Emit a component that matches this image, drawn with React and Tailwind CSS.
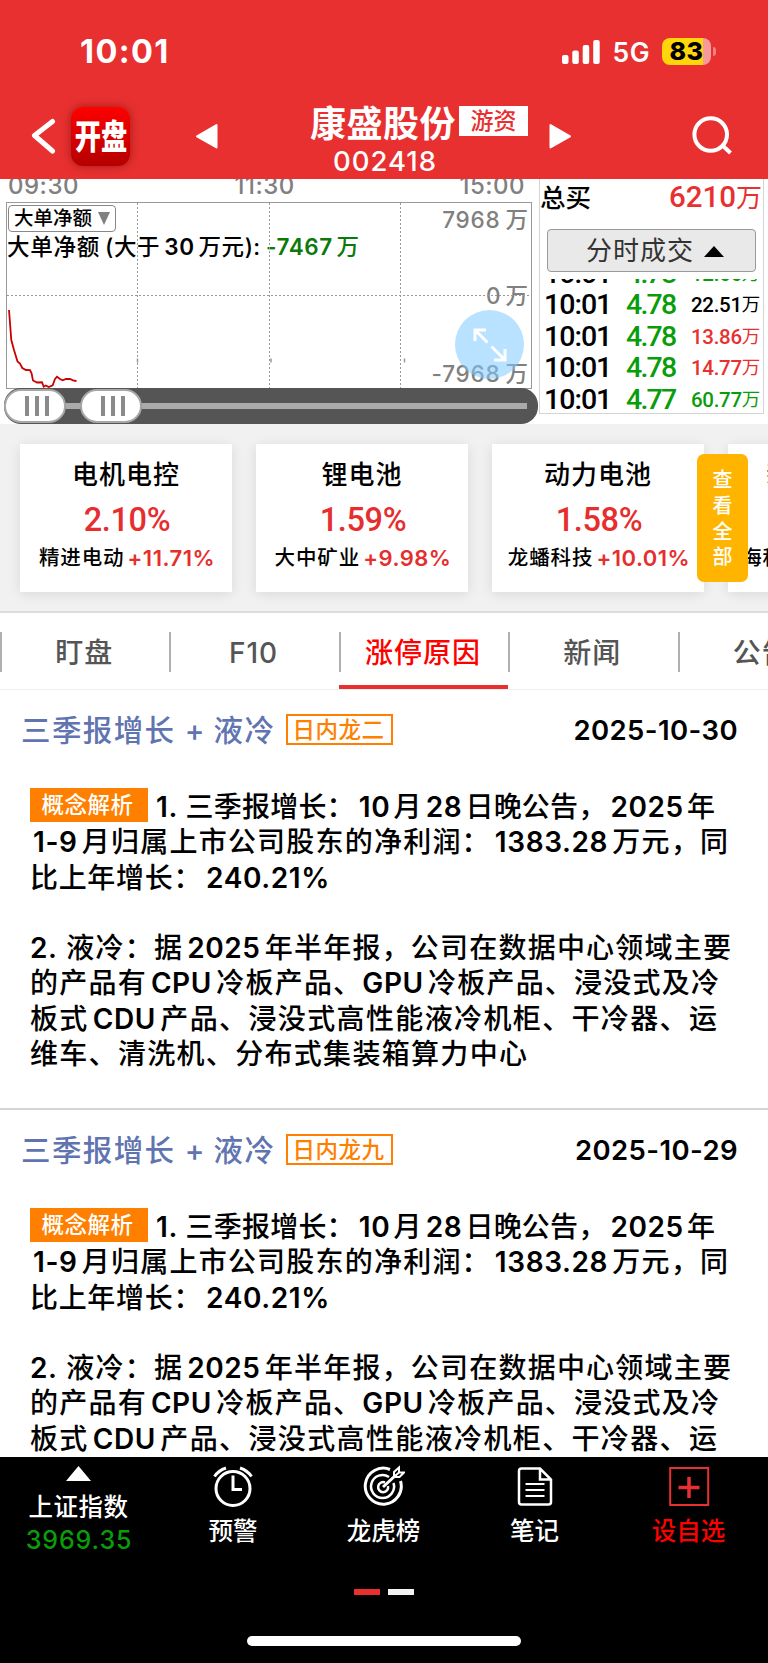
const trades = [
  { time: "10:01", price: "4.78", amount: "12.66", color: "text-[#0a9d0a]" },
  { time: "10:01", price: "4.78", amount: "22.51", color: "text-black" },
  { time: "10:01", price: "4.78", amount: "13.86", color: "text-[#e83030]" },
  { time: "10:01", price: "4.78", amount: "14.77", color: "text-[#e83030]" },
  { time: "10:01", price: "4.77", amount: "60.77", color: "text-[#0a9d0a]" },
];

const sectors = [
  { name: "电机电控", change: "2.10%", stock: "精进电动", stockChange: "+11.71%" },
  { name: "锂电池", change: "1.59%", stock: "大中矿业", stockChange: "+9.98%" },
  { name: "动力电池", change: "1.58%", stock: "龙蟠科技", stockChange: "+10.01%" },
  { name: "新能源汽车", change: "1.42%", stock: "海科新源", stockChange: "+10.00%" },
];

const tabs = ["盯盘", "F10", "涨停原因", "新闻", "公告"];

const reasons = [
  { tag: "日内龙二", date: "2025-10-30" },
  { tag: "日内龙九", date: "2025-10-29" },
];

// Latin runs get a slightly heavier weight and a small gap to the Chinese text
function Mixed({ text }) {
  return text.split(/([A-Za-z0-9.%-]+)/).map((part, i, all) =>
    i % 2 === 1 ? (
      <span
        key={i}
        className={`font-[560] tracking-[0.6px] ${all[i - 1] && !/、$/.test(all[i - 1]) ? "ml-[4px]" : ""} ${
          all[i + 1] && !/^[ ：，]/.test(all[i + 1]) ? "mr-[3px]" : ""
        }`}
      >
        {part}
      </span>
    ) : (
      part
    )
  );
}

function StatusBar() {
  return (
    <div className="flex h-[97px] items-center pt-[6px] pl-[80px] pr-[52px]">
      <span className="pt-[2px] text-[32.500px] font-bold leading-none tracking-[1.400px]">10:01</span>
      <svg className="ml-auto" width="38" height="24" viewBox="0 0 38 24" fill="white">
        <rect x="0" y="15" width="6.5" height="9" rx="2" />
        <rect x="10.3" y="10.5" width="6.5" height="13.5" rx="2" />
        <rect x="20.7" y="5" width="6.5" height="19" rx="2" />
        <rect x="31.2" y="0" width="6.5" height="24" rx="2" />
      </svg>
      <span className="ml-[12px] pt-px text-[26.500px] font-semibold leading-none tracking-[0.500px]">5G</span>
      <div className="ml-[12px] flex h-[27px] w-[49px] items-center justify-center rounded-[8px] bg-[linear-gradient(90deg,#ffd60a_41px,#f69a9b_41px)]">
        <span className="text-[25px] font-extrabold leading-none tracking-[0.500px] text-black">83</span>
      </div>
      <div className="ml-[2px] h-[9px] w-[3px] rounded-r-full bg-[#f28081]" />
    </div>
  );
}

function NavBar() {
  return (
    <div className="flex h-[82px] items-start pl-[31px]">
      <svg className="mt-[21px]" width="26" height="38" viewBox="0 0 26 38" fill="none" stroke="white" strokeWidth="5" strokeLinecap="round" strokeLinejoin="round">
        <path d="M21.5 3.5 3.5 17.5 21.5 33" />
      </svg>
      <div className="mt-[10px] ml-[14px] flex h-[59px] w-[59px] items-center justify-center rounded-[12px] bg-gradient-to-b from-[#ff0000] to-[#b40000] shadow-[0_0_8px_rgba(90,0,0,0.5)]">
        <span className="scale-x-[0.82] scale-y-105 whitespace-nowrap text-[32px] font-black leading-none">开盘</span>
      </div>
      <svg className="mt-[26px] ml-[65px]" width="23" height="27" viewBox="0 0 23 27" fill="white" stroke="white" strokeWidth="2" strokeLinejoin="round">
        <path d="M21.5 2v22.500L2 13.300z" />
      </svg>
      <div className="ml-[92px] flex w-[220px] flex-col">
        <div className="flex items-start">
          <span className="mt-[8px] w-[149px] whitespace-nowrap text-[36px] font-bold leading-[38px] tracking-[0.500px]">康盛股份</span>
          <span className="mt-[9px] flex h-[30px] w-[69px] items-center justify-center whitespace-nowrap bg-white text-[23px] font-medium leading-none text-[#e83030]">
            游资
          </span>
        </div>
        <span className="mt-[6px] ml-[23px] text-[27.500px] font-medium leading-[24px] tracking-[1px]">002418</span>
      </div>
      <svg className="mt-[26px] ml-[19px]" width="23" height="27" viewBox="0 0 23 27" fill="white" stroke="white" strokeWidth="2" strokeLinejoin="round">
        <path d="M1.500 2v22.500L21 13.300z" />
      </svg>
      <svg className="mt-[18px] ml-[119px]" width="42" height="42" viewBox="0 0 42 42" fill="none" stroke="white" strokeWidth="4">
        <circle cx="19.700" cy="19.500" r="16.300" />
        <path d="M30.500 29.500 39.500 38" />
      </svg>
    </div>
  );
}

function Handle() {
  return (
    <div className="z-10 flex h-[34px] w-[62px] items-center justify-center gap-[6px] rounded-[17px] border-2 border-[#a8a8a8] bg-white pl-[4px]">
      <i className="h-[20px] w-[4px] bg-[#8a8a8a]" />
      <i className="h-[20px] w-[4px] bg-[#8a8a8a]" />
      <i className="h-[20px] w-[4px] bg-[#8a8a8a]" />
    </div>
  );
}

function NetChart() {
  return (
    <div className="relative h-[245px] w-[539px] shrink-0 text-[#808080]">
      {/* time axis, partly scrolled under the header */}
      <div className="flex h-[23px] justify-between overflow-hidden pl-[8px] pr-[14px] text-[24px] font-medium leading-[24px] tracking-[0.500px]">
        <span className="-mt-[5px]">09:30</span>
        <span className="-mt-[5px] mr-[9px]">11:30</span>
        <span className="-mt-[5px]">15:00</span>
      </div>

      <div className="ml-[6px] flex h-[187px] w-[526px] justify-between border border-[#999]">
        <div className="pt-[2px]">
          <div className="ml-[1px] flex h-[27px] w-[108px] items-center justify-between rounded-[4px] border border-[#888] pl-[5px] pr-[5px]">
            <span className="whitespace-nowrap text-[19.500px] font-medium leading-none text-black">大单净额</span>
            <svg width="12" height="13" viewBox="0 0 12 13" fill="#808080">
              <path d="M0 0h12L6 13z" />
            </svg>
          </div>
          <div className="mt-px flex whitespace-nowrap text-[22.500px] font-medium leading-[28px] text-black">
            <span className="w-[253px] [text-align-last:justify]">
              <Mixed text="大单净额" />
              <span className="ml-[5px]">(</span>
              <Mixed text="大于30万元" />):
            </span>
            <span className="ml-[6px] w-[93px] text-[#0b7a0b] [text-align-last:justify]">
              <Mixed text="-7467万" />
            </span>
          </div>
        </div>
        <div className="flex flex-col items-end pr-[3px] pt-[3px] text-[22.500px] font-medium leading-[28px]">
          <span className="whitespace-nowrap">
            <span className="mr-[5px] tracking-[0.800px]">7968</span>万
          </span>
          <span className="mt-[48px] whitespace-nowrap">
            <span className="mr-[5px]">0</span>万
          </span>
          <span className="mt-[50px] whitespace-nowrap">
            <span className="mr-[5px] tracking-[0.800px]">-7968</span>万
          </span>
        </div>
      </div>

      <svg className="absolute left-0 top-[23px]" width="539" height="187" viewBox="0 202 539 187" fill="none">
        <path d="M7 295.500H531M137.500 203V388M269.500 203V388M400.500 203V388" stroke="#999" strokeDasharray="2 2" />
        <path d="M137.500 358.500v4M271 358.500v4M404.500 358.500v4" stroke="#999" strokeWidth="1.500" />
        <path
          d="M9 310 11.300 340 14 350 17.500 361.500 20 363.500 22.300 368 26 370 30 370.200 31.500 373 33 380.500 37 382.500 42 382.300 43.700 386.700 45.700 385.500 48.700 387 52.700 385.300 55 379 57 376.700 60 379 62.700 380.300 66 379 70 379 73 380.300 76.500 381"
          stroke="#cc0000"
          strokeWidth="1.800"
        />
      </svg>

      {/* expand button over the chart */}
      <div className="absolute left-[455px] top-[131px] flex h-[69px] w-[69px] items-center justify-center rounded-full bg-[#7dcbff]/55">
        <svg width="34" height="34" viewBox="0 0 34 34" fill="none" stroke="white" strokeWidth="3">
          <path d="M2 13V2H13M2.500 2.500 14.500 14.500M18.500 18.500 31 31M21 32H32V21" />
        </svg>
      </div>

      <div className="relative -mt-px ml-[4px] flex h-[36px] w-[534px] items-center rounded-r-[17px] rounded-l-[17px] bg-[#555]">
        <Handle />
        <div className="h-[6px] w-[14px] bg-[#aaa]" />
        <Handle />
        <div className="h-[6px] w-[385px] bg-[#aaa]" />
      </div>
    </div>
  );
}

function TradePanel() {
  return (
    <div className="h-[235px] w-[225px] overflow-hidden border border-t-0 border-[#d5d5d5]">
      <div className="flex h-[37px] items-center justify-between pr-px">
        <span className="whitespace-nowrap text-[25.500px] font-medium leading-none text-black">总买</span>
        <span className="flex items-center whitespace-nowrap font-['Roboto','Noto_Sans_CJK_SC',sans-serif] text-[29.500px] font-medium leading-none text-[#e83030]">
          6210<span className="text-[26px] font-normal">万</span>
        </span>
      </div>
      <div className="mt-[13px] ml-[7px] flex h-[43px] w-[209px] items-center justify-center gap-[10px] rounded-[4px] border border-[#999] bg-[#e9e9e9] pt-px pl-[7px]">
        <span className="whitespace-nowrap text-[26px] leading-none tracking-[1px] text-[#333]">分时成交</span>
        <svg width="20" height="11" viewBox="0 0 20 11" fill="black">
          <path d="M10 0 20 11H0z" />
        </svg>
      </div>
      <div className="mt-[7px] flex h-[134px] flex-col justify-end overflow-hidden font-['Roboto','Noto_Sans_CJK_SC',sans-serif]">
        {trades.map((t, i) => (
          <div key={i} className="flex h-[31.400px] shrink-0 items-center pt-[5px] pl-[4px] pr-[3px]">
            <span className="w-[82px] text-[28.500px] font-medium leading-none tracking-[-1px] text-black">{t.time}</span>
            <span className="text-[28.500px] font-medium leading-none tracking-[-1.800px] text-[#0a9d0a]">{t.price}</span>
            <span className={`ml-auto flex items-center whitespace-nowrap text-[20.500px] font-medium leading-none tracking-[-0.300px] ${t.color}`}>
              {t.amount}
              <span className="text-[18.500px] font-normal">万</span>
            </span>
          </div>
        ))}
      </div>
    </div>
  );
}

function Sectors() {
  return (
    <div className="relative h-[189px] overflow-hidden border-b-2 border-[#ddd] bg-[#f1f1f1]">
      <div className="flex w-[1000px] gap-[24px] pl-[20px] pt-[20px]">
        {sectors.map((s) => (
          <div key={s.name} className="flex h-[148px] w-[212px] shrink-0 flex-col items-center whitespace-nowrap bg-white shadow-[0_2px_12px_rgba(0,0,0,0.1)]">
            <span className="mt-[16px] text-[26px] font-medium leading-[30px] tracking-[1px] text-black">{s.name}</span>
            <span className="mt-[14px] ml-[2px] font-['Roboto'] text-[32.500px] font-medium leading-[32px] tracking-[-0.400px] text-[#e62e2e]">{s.change}</span>
            <span className="mt-[10px] ml-[2px] flex items-center gap-[3px] text-[20.500px] font-medium leading-[24px] tracking-[0.900px] text-black">
              {s.stock}
              <span className="text-[22px] font-[560] tracking-[0.500px] text-[#e62e2e]">{s.stockChange}</span>
            </span>
          </div>
        ))}
      </div>
      <button className="absolute left-[697px] top-[30px] flex h-[128px] w-[51px] flex-col items-center justify-center rounded-[7px] bg-[#ffb400] pt-[3px] text-[20px] font-medium leading-[25.800px] text-white">
        <span>查</span>
        <span>看</span>
        <span>全</span>
        <span>部</span>
      </button>
    </div>
  );
}

function Tabs() {
  return (
    <div className="flex h-[77px] overflow-hidden border-b border-[#eee]">
      {tabs.map((tab) => (
        <div key={tab} className="relative flex w-[169.400px] shrink-0 pt-[19px]">
          <i className="h-[40px] w-[2px] bg-[#b0b0b0]" />
          <span
            className={`flex h-[40px] flex-1 items-center justify-center whitespace-nowrap pt-px pr-[3px] text-[28px] font-medium tracking-[1px] ${
              tab === "涨停原因" ? "text-[#ff0000]" : "text-[#555]"
            }`}
          >
            {tab}
          </span>
          {tab === "涨停原因" && <i className="absolute bottom-0 left-0 h-[4px] w-full bg-[#e83030]" />}
        </div>
      ))}
    </div>
  );
}

function Reason({ tag, date }) {
  return (
    <article className="h-[420px] shrink-0 overflow-hidden whitespace-nowrap border-b-2 border-[#d5d5d5] text-black">
      <header className="flex h-[79px] items-center pl-[21px] pr-[30px]">
        <h2 className="w-[253px] pt-[2px] text-[29.500px] font-medium leading-none text-[#5f74b0] [text-align-last:justify]">三季报增长 + 液冷</h2>
        <span className="ml-[12px] flex h-[31px] w-[107px] items-center justify-center border-2 border-[#ff8000] pt-px pr-[2px] text-[22.500px] font-medium leading-none tracking-[0.500px] text-[#ff8000]">
          {tag}
        </span>
        <time className="ml-auto pt-[2px] text-[27.500px] font-[560] leading-none tracking-[0.400px]">{date}</time>
      </header>
      <div className="pl-[30px] pt-[21px] text-[28px] font-medium leading-[35.300px]">
        <div className="flex">
          <span className="-mt-[2px] flex h-[34px] w-[118px] items-center justify-center bg-[#ff8000] pt-px pr-[3px] text-[22.500px] leading-none tracking-[0.500px] text-white">
            概念解析
          </span>
          <p className="ml-[8px] w-[559px] [text-align-last:justify]">
            <Mixed text="1. 三季报增长：10月28日晚公告，2025年" />
          </p>
        </div>
        <p className="ml-[3px] w-[695px] [text-align-last:justify]">
          <Mixed text="1-9月归属上市公司股东的净利润：1383.28万元，同" />
        </p>
        <p className="w-[300px] [text-align-last:justify]">
          <Mixed text="比上年增长：240.21%" />
        </p>
        <br />
        <p className="w-[701px] [text-align-last:justify]">
          <Mixed text="2. 液冷：据2025年半年报，公司在数据中心领域主要" />
        </p>
        <p className="w-[689px] [text-align-last:justify]">
          <Mixed text="的产品有CPU冷板产品、GPU冷板产品、浸没式及冷" />
        </p>
        <p className="w-[687px] [text-align-last:justify]">
          <Mixed text="板式CDU产品、浸没式高性能液冷机柜、干冷器、运" />
        </p>
        <p className="w-[497px] [text-align-last:justify]">维车、清洗机、分布式集装箱算力中心</p>
      </div>
    </article>
  );
}

function ToolItem({ label, width, red, children }) {
  return (
    <div className={`flex flex-col items-center pt-[8px] ${width}`}>
      <svg width="42" height="42" viewBox="0 0 42 42" fill="none" stroke={red ? "#e83030" : "white"} strokeWidth="3">
        {children}
      </svg>
      <span className={`mt-[9px] whitespace-nowrap text-[24.500px] font-medium leading-[30px] ${red ? "text-[#ff0000]" : "text-white"}`}>{label}</span>
    </div>
  );
}

function BottomBar() {
  return (
    <footer className="flex h-[206px] shrink-0 flex-col items-center bg-black text-white">
      <div className="flex h-[132px] w-full">
        <div className="flex w-[157px] flex-col items-center pt-[9px]">
          <svg width="25" height="15" viewBox="0 0 25 15" fill="white">
            <path d="M12.500 0 25 15H0z" />
          </svg>
          <span className="mt-[11px] whitespace-nowrap text-[24.500px] font-medium leading-[30px] tracking-[0.500px]">上证指数</span>
          <span className="mt-[4px] ml-px text-[25px] font-medium leading-[28px] tracking-[0.900px] text-[#0a9d0a]">3969.35</span>
        </div>
        <ToolItem label="预警" width="w-[152px]">
          <circle cx="21" cy="23.500" r="17" />
          <path d="M21 10.500V24.500H30" />
          <path d="M2.500 11.500Q6.500 5.500 14 3M39.500 11.500Q35.500 5.500 28 3" />
        </ToolItem>
        <ToolItem label="龙虎榜" width="w-[149px]">
          <path d="M27 4.500A18 18 0 1 0 37.500 16" />
          <path d="M26 12A11.500 11.500 0 1 0 30.500 18" strokeWidth="2.500" />
          <path d="M22 17.500A5 5 0 1 0 25 21" strokeWidth="2.500" />
          <path d="M20 22 33 10" strokeWidth="3" />
          <path d="M31 12V7L36 2.500V7.500H41L36.500 12zL36 7.500" strokeWidth="2" />
        </ToolItem>
        <ToolItem label="笔记" width="w-[153px]">
          <path d="M26 3.500H7.500Q5 3.500 5 6V37Q5 39.500 7.500 39.500H34.500Q37 39.500 37 37V14.500zM26 3.500V14.500H37" strokeWidth="2.500" />
          <path d="M11.500 19H30.500M11.500 25H30.500M11.500 31H30.500" strokeWidth="2" />
        </ToolItem>
        <ToolItem label="设自选" width="w-[155px]" red>
          <rect x="2.200" y="3" width="38" height="37" strokeWidth="2" />
          <path d="M21 12V33M10.500 22.500H31.500" strokeWidth="3.500" />
        </ToolItem>
      </div>
      <div className="flex gap-[8px]">
        <i className="h-[6px] w-[26px] bg-[#e83030]" />
        <i className="h-[6px] w-[26px] bg-[#f2f2f2]" />
      </div>
      <div className="mt-[41px] h-[10px] w-[274px] rounded-full bg-white" />
    </footer>
  );
}

export default function App() {
  return (
    <div className="flex h-[1663px] w-[768px] flex-col overflow-hidden bg-white font-['Inter','Noto_Sans_CJK_SC',sans-serif]">
      <div className="h-[179px] shrink-0 bg-[#e83030] text-white">
        <StatusBar />
        <NavBar />
      </div>
      <div className="flex h-[245px] shrink-0">
        <NetChart />
        <TradePanel />
      </div>
      <Sectors />
      <Tabs />
      <main className="flex h-[767px] shrink-0 flex-col overflow-hidden">
        {reasons.map((r) => (
          <Reason key={r.date} {...r} />
        ))}
      </main>
      <BottomBar />
    </div>
  );
}
